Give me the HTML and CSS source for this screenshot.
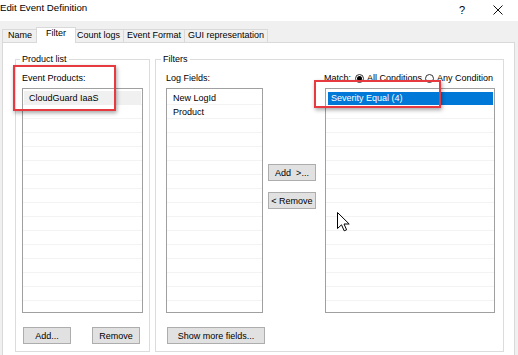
FILE: index.html
```html
<!DOCTYPE html>
<html lang="en">
<head>
  <meta charset="UTF-8">
  <meta name="viewport" content="width=device-width, initial-scale=1.0">
  <title>Edit Event Definition</title>
  <link rel="stylesheet" href="styles.css">
</head>
<body>
  <div class="dialog">
    <div class="titlebar">
      <span class="title">Edit Event Definition</span>
      <span class="help">?</span>
      <svg class="close" viewBox="0 0 10 10"><path d="M0.5 0.5L9.5 9.5M9.5 0.5L0.5 9.5"/></svg>
    </div>

    <div class="tabs">
      <div class="tab tab-name">Name</div>
      <div class="tab tab-filter active">Filter</div>
      <div class="tab tab-count">Count logs</div>
      <div class="tab tab-format">Event Format</div>
      <div class="tab tab-gui">GUI representation</div>
    </div>

    <div class="page">
      <fieldset class="group products">
        <legend>Product list</legend>
        <div class="field-label">Event Products:</div>
        <div class="listbox products-list">
          <div class="row dim">CloudGuard IaaS</div>
        </div>
        <div class="btn-row">
          <button class="btn">Add...</button>
          <button class="btn">Remove</button>
        </div>
      </fieldset>

      <fieldset class="group filters">
        <legend>Filters</legend>
        <div class="filters-grid">
          <div class="field-label">Log Fields:</div>
          <div></div>
          <div class="field-label match">
            <span>Match:</span>
            <span class="radio on"></span><span>All Conditions</span>
            <span class="radio"></span><span>Any Condition</span>
          </div>

          <div class="listbox">
            <div class="row">New LogId</div>
            <div class="row">Product</div>
          </div>
          <div class="move-btns">
            <button class="btn">Add&nbsp;&nbsp;&gt;...</button>
            <button class="btn">&lt; Remove</button>
          </div>
          <div class="listbox conditions">
            <div class="row selected">Severity Equal (4)</div>
          </div>
        </div>
        <div class="btn-row">
          <button class="btn wide">Show more fields...</button>
        </div>
      </fieldset>
    </div>

    <!-- annotations -->
    <div class="mark mark-products"></div>
    <div class="mark mark-condition"></div>
    <svg class="cursor" viewBox="0 0 13 20"><path d="M0.5 0.5V16.5L4.5 12.8L7.2 18.8L9.6 17.8L7 12H12.2Z"/></svg>
  </div>
</body>
</html>
```

FILE: styles.css
```css
* {
  box-sizing: border-box;
  margin: 0;
  padding: 0;
}

body {
  background: #f0f0f0;
  font-family: "Liberation Sans", Arial, sans-serif;
  font-size: 9px;
  color: #000;
}

.dialog {
  position: relative;
  width: 518px;
  height: 355px;
  overflow: hidden;
  background: #f0f0f0;
}

.titlebar {
  height: 21px;
  background: #fff;
  display: flex;
  align-items: flex-start;
}

.title {
  font-size: 9.7px;
  line-height: 16px;
}

.help {
  margin-left: auto;
  margin-right: 28px;
  font-size: 11px;
  line-height: 20px;
}

.close {
  width: 10px;
  height: 10px;
  margin-top: 5px;
  margin-right: 15px;
  fill: none;
  stroke: #111;
  stroke-width: 1;
}

/* tab strip */
.tabs {
  display: flex;
  align-items: flex-end;
  height: 13px;
  margin-top: 8px;
  padding-left: 2px;
}

.tab {
  height: 13px;
  margin-left: -1px;
  border: 1px solid #d9d9d9;
  border-bottom: none;
  background: #f0f0f0;
  text-align: center;
  line-height: 10px;
  white-space: nowrap;
}

.tab:first-child {
  margin-left: 0;
}

.tab.active {
  position: relative;
  z-index: 1;
  height: 16px;
  margin: 0 -2px -1px -2px;
  background: #fff;
}

.tab-name { width: 36px; }
.tab-filter { width: 40px; }
.tab-count { width: 51px; }
.tab-format { width: 62px; }
.tab-gui { width: 84px; }

.page {
  display: flex;
  align-items: flex-start;
  gap: 5px;
  width: 513px;
  height: 320px;
  margin-left: 2px;
  padding: 11px 0 0 12px;
  background: #fff;
  border: 1px solid #d9d9d9;
}

/* group boxes */
.group {
  height: 298px;
  min-width: 0;
  border: 1px solid #dcdcdc;
}

.group legend {
  padding: 0 2px;
  line-height: 11px;
}

.products {
  width: 135px;
  padding: 0 5px 0 6px;
}

.products legend {
  margin-left: -2px;
}

.filters {
  width: 349px;
  padding: 0 8px 0 10px;
}

.filters legend {
  margin-left: -5px;
}

.field-label {
  margin-top: 7px;
  line-height: 12px;
  white-space: nowrap;
}

.listbox {
  height: 225px;
  padding: 2px 1px;
  border: 1px solid #a0a0a0;
  background: repeating-linear-gradient(#fff 0 13px, #f3f3f3 13px 14px);
  background-position: 0 2px;
}

.products-list {
  width: 121px;
  margin-top: 4px;
}

.row {
  height: 14px;
  padding-left: 5px;
  line-height: 14px;
  white-space: nowrap;
}

.row.dim {
  background: #f0f0f0;
}

.conditions {
  padding-left: 2px;
}

.row.selected {
  height: 13px;
  margin-top: 1px;
  padding-left: 3px;
  line-height: 12px;
  background: #0078d7;
  color: #fff;
}

.filters-grid {
  display: grid;
  grid-template-columns: 97px 62px 170px;
  row-gap: 4px;
}

.match {
  display: flex;
  align-items: center;
  margin-left: -1px;
}

.radio {
  display: inline-flex;
  align-items: center;
  justify-content: center;
  width: 9px;
  height: 9px;
  margin: 0 3px 0 4px;
  border: 1px solid #333;
  border-radius: 50%;
}

.radio + span + .radio {
  margin-left: 3px;
}

.radio.on::after {
  content: "";
  width: 5px;
  height: 5px;
  border-radius: 50%;
  background: #000;
}

.move-btns {
  display: flex;
  flex-direction: column;
  gap: 11px;
  padding: 76px 0 0 5px;
}

/* buttons */
.btn {
  width: 48px;
  height: 17px;
  border: 1px solid #adadad;
  background: #e1e1e1;
  font: inherit;
  color: #000;
  white-space: nowrap;
}

.btn.wide {
  width: 98px;
}

.btn-row {
  display: flex;
  justify-content: space-between;
  margin-top: 14px;
  padding: 0 4px 0 1px;
}

/* red highlight boxes drawn on top of the screenshot */
.mark {
  position: absolute;
  border: 2px solid #e63a40;
  box-shadow: 1px 2px 4px rgba(0, 0, 0, 0.35);
}

.mark-products {
  left: 13px;
  top: 65px;
  width: 103px;
  height: 46px;
}

.mark-condition {
  left: 314px;
  top: 80px;
  width: 127px;
  height: 28px;
}

.cursor {
  position: absolute;
  left: 337px;
  top: 212px;
  width: 13px;
  height: 20px;
  fill: #fff;
  stroke: #000;
  stroke-width: 1;
  stroke-linejoin: round;
}
```
